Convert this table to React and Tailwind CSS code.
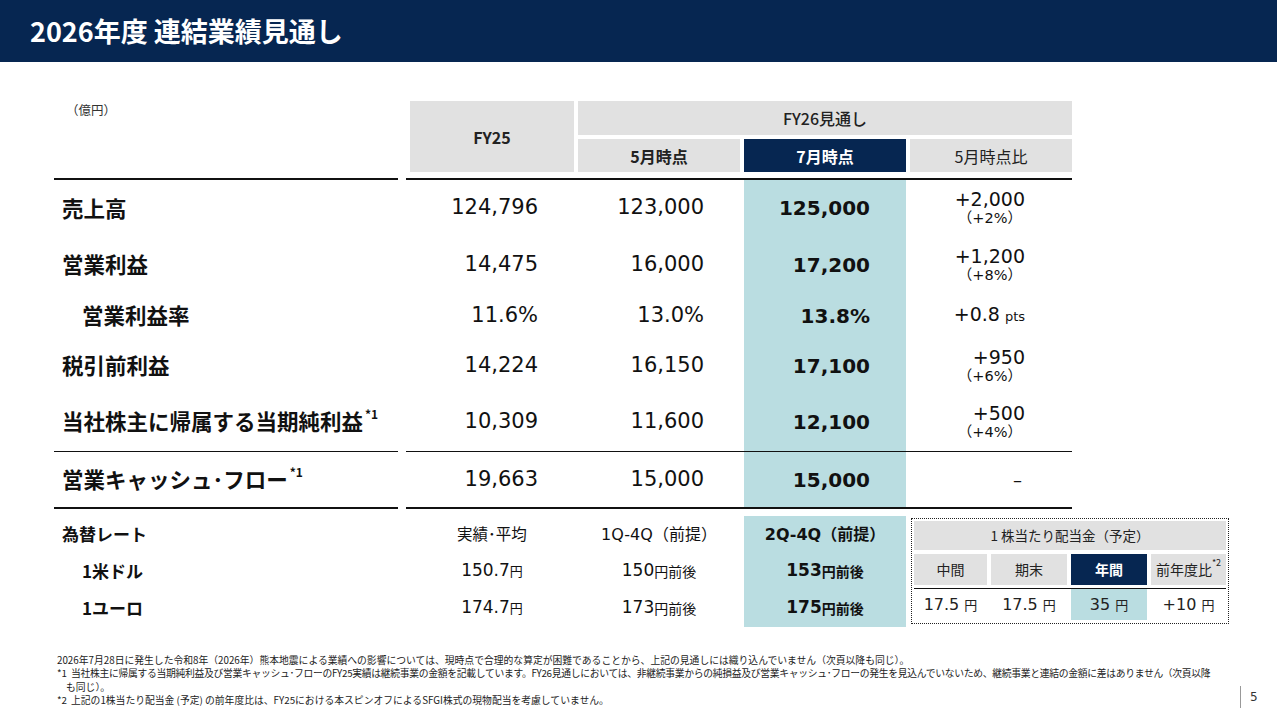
import React from "react";

const rows = [
  { label: "売上高", h: "h-[57px]", fy25: "124,796", may: "123,000", jul: "125,000", diff: "+2,000", pct: "（+2%）" },
  { label: "営業利益", h: "h-[56px]", fy25: "14,475", may: "16,000", jul: "17,200", diff: "+1,200", pct: "（+8%）" },
  { label: "営業利益率", h: "h-[46px]", indent: true, fy25: "11.6%", may: "13.0%", jul: "13.8%", diff: "+0.8", unit: "pts" },
  { label: "税引前利益", h: "h-[54px]", fy25: "14,224", may: "16,150", jul: "17,100", diff: "+950", pct: "（+6%）" },
  { label: "当社株主に帰属する当期純利益", h: "h-[58px]", note: "*1", fy25: "10,309", may: "11,600", jul: "12,100", diff: "+500", pct: "（+4%）" },
];

const fx = [
  { label: "為替レート", head: true },
  { label: "1米ドル", fy25: "150.7", fy25u: "円", may: "150", mayu: "円前後", jul: "153", julu: "円前後" },
  { label: "1ユーロ", fy25: "174.7", fy25u: "円", may: "173", mayu: "円前後", jul: "175", julu: "円前後" },
];

const jp = "font-['Noto_Sans_CJK_JP',sans-serif]";

function Rule() {
  return (
    <div className="flex gap-[8px]">
      <div className="w-[344px] h-[1.5px] bg-[#111]" />
      <div className="w-[666px] h-[1.5px] bg-[#111]" />
    </div>
  );
}

function DataRow({ r }) {
  return (
    <div className={`grid grid-cols-[352px_164px_162px_162px_162px] gap-x-[4px] ${r.h}`}>
      <div
        className={`flex items-center text-[21.5px] font-bold text-[#111] font-['Noto_Sans_CJK_JP',sans-serif] ${
          r.indent ? "pl-[28px]" : "pl-[8px]"
        }`}
      >
        {r.label}
        {r.note && <sup className="text-[12px] font-bold ml-[2px] -mt-[4px]">{r.note}</sup>}
      </div>
      <div className="flex items-center justify-end pr-[36px] text-[21px] text-[#111]">{r.fy25}</div>
      <div className="flex items-center justify-end pr-[36px] text-[21px] text-[#111]">{r.may}</div>
      <div className="flex items-center justify-end pr-[36px] text-[20px] font-bold text-[#111] bg-[#badde1]">
        {r.jul}
      </div>
      <div className="flex flex-col items-end justify-center pr-[47px] text-[#111]">
        {r.diff === "–" ? (
          <span className="text-[18px] pr-[3px]">–</span>
        ) : (
          <>
            <span className="text-[19px] leading-[21px]">
              {r.diff}
              {r.unit && <span className="text-[13px] ml-[5px]">{r.unit}</span>}
            </span>
            {r.pct && <span className="text-[14.5px] leading-[17px] pr-[3px]">{r.pct}</span>}
          </>
        )}
      </div>
    </div>
  );
}

function Yen({ v, u = "円" }) {
  return (
    <div className="flex items-center justify-center">
      {v}
      <span className={`text-[13px] ml-[5px] ${jp}`}>{u}</span>
    </div>
  );
}

function Dividend() {
  return (
    <div className="ml-[1px] mt-[2px] w-[318px] h-[106px] border border-dotted border-[#222] p-[2px] text-[#222] font-['Noto_Sans_CJK_JP',sans-serif]">
      <div className="h-[29px] bg-[#e1e1e1] flex items-center justify-center text-[13.5px]">
        1 株当たり配当金（予定）
      </div>
      <div className="mt-[4px] grid grid-cols-[73px_76px_76px_75px] gap-x-[4px] h-[31px] text-[14px]">
        <div className="bg-[#e1e1e1] flex items-center justify-center">中間</div>
        <div className="bg-[#e1e1e1] flex items-center justify-center">期末</div>
        <div className="bg-[#062651] text-white font-bold flex items-center justify-center">年間</div>
        <div className="bg-[#e1e1e1] flex items-center justify-center">
          前年度比<sup className="text-[9px] -mt-[4px]">*2</sup>
        </div>
      </div>
      <div className="mt-[3px] h-[1.5px] bg-[#111]" />
      <div className="grid grid-cols-[73px_76px_76px_75px] gap-x-[4px] h-[31px] text-[16px] font-['DejaVu_Sans','Noto_Sans_CJK_JP',sans-serif]">
        <Yen v="17.5" />
        <Yen v="17.5" />
        <div className="bg-[#badde1] flex items-center justify-center">
          35<span className={`text-[13px] ml-[5px] ${jp}`}>円</span>
        </div>
        <Yen v="+10" />
      </div>
    </div>
  );
}

export default function App() {
  return (
    <div className="w-[1277px] h-[716px] bg-white overflow-hidden font-['DejaVu_Sans','Noto_Sans_CJK_JP',sans-serif]">
      <div className="h-[62px] bg-[#062651] flex items-center pl-[30px] text-white text-[27px] font-bold font-['Noto_Sans_CJK_JP',sans-serif]">
        2026年度 連結業績見通し
      </div>

      <div className="pl-[54px] pt-[39px]">
        {/* header cells */}
        <div className="grid grid-cols-[352px_164px_162px_162px_162px] grid-rows-[34px_33px] gap-[4px] font-['Noto_Sans_CJK_JP',sans-serif] text-[16px] text-[#222]">
          <div className="row-span-2 pl-[12px] text-[12.5px] text-[#333]">（億円）</div>
          <div className="row-span-2 bg-[#e1e1e1] flex items-center justify-center font-bold">FY25</div>
          <div className="col-span-3 bg-[#e1e1e1] flex items-center justify-center font-medium">FY26見通し</div>
          <div className="bg-[#e1e1e1] flex items-center justify-center font-bold">5月時点</div>
          <div className="bg-[#062651] text-white flex items-center justify-center font-bold">7月時点</div>
          <div className="bg-[#e1e1e1] flex items-center justify-center">5月時点比</div>
        </div>

        <div className="mt-[6px]">
          <Rule />
        </div>

        {rows.map((r) => (
          <DataRow key={r.label} r={r} />
        ))}
        <Rule />
        <DataRow
          r={{
            label: "営業キャッシュ･フロー",
            h: "h-[55px]",
            note: "*1",
            fy25: "19,663",
            may: "15,000",
            jul: "15,000",
            diff: "–",
          }}
        />
        <Rule />

        {/* exchange rates + dividend */}
        <div className="mt-[7px] grid grid-cols-[352px_164px_162px_162px_319px] grid-rows-[37px_37px_37px] gap-x-[4px] text-[#111]">
          {fx.map((f, i) => (
            <React.Fragment key={f.label}>
              <div
                className={`flex items-center text-[17px] font-bold font-['Noto_Sans_CJK_JP',sans-serif] ${
                  f.head ? "pl-[8px]" : "pl-[28px]"
                }`}
                style={{ gridRow: i + 1, gridColumn: 1 }}
              >
                {f.label}
              </div>
              <div className="flex items-center justify-center text-[17px]" style={{ gridRow: i + 1, gridColumn: 2 }}>
                {f.head ? (
                  <span className={`text-[15.5px] ${jp}`}>実績･平均</span>
                ) : (
                  <>
                    {f.fy25}
                    <span className={`text-[13px] ${jp}`}>{f.fy25u}</span>
                  </>
                )}
              </div>
              <div className="flex items-center justify-center text-[17px]" style={{ gridRow: i + 1, gridColumn: 3 }}>
                {f.head ? (
                  <span className="text-[16px]">
                    1Q-4Q<span className={jp}>（前提）</span>
                  </span>
                ) : (
                  <>
                    {f.may}
                    <span className={`text-[14px] ${jp}`}>{f.mayu}</span>
                  </>
                )}
              </div>
              <div
                className="flex items-center justify-center bg-[#badde1] font-bold text-[17px]"
                style={{ gridRow: i + 1, gridColumn: 4 }}
              >
                {f.head ? (
                  <span className="text-[16px]">
                    2Q-4Q<span className={jp}>（前提）</span>
                  </span>
                ) : (
                  <>
                    {f.jul}
                    <span className={`text-[14px] ${jp}`}>{f.julu}</span>
                  </>
                )}
              </div>
            </React.Fragment>
          ))}
          <div style={{ gridRow: "1 / span 3", gridColumn: 5 }}>
            <Dividend />
          </div>
        </div>

        {/* footnotes */}
        <div className="mt-[27px] flex items-end">
          <div className="w-[1186px] pl-[3px] text-[9.8px] leading-[13.5px] text-[#222] font-['Noto_Sans_CJK_JP',sans-serif] whitespace-nowrap">
            <div>
              2026年7月28日に発生した令和8年（2026年）熊本地震による業績への影響については、現時点で合理的な算定が困難であることから、上記の見通しには織り込んでいません（次頁以降も同じ）。
            </div>
            <div className="flex">
              <span className="w-[14px]">*1</span>
              <span className="tracking-[-0.3px]">
                当社株主に帰属する当期純利益及び営業キャッシュ･フローのFY25実績は継続事業の金額を記載しています。FY26見通しにおいては、非継続事業からの純損益及び営業キャッシュ･フローの発生を見込んでいないため、継続事業と連結の金額に差はありません（次頁以降
              </span>
            </div>
            <div className="pl-[9px]">も同じ）。</div>
            <div className="flex">
              <span className="w-[14px]">*2</span>
              <span>
                上記の1株当たり配当金 (予定) の前年度比は、FY25における本スピンオフによるSFGI株式の現物配当を考慮していません。
              </span>
            </div>
          </div>
          <div className="h-[22px] border-l border-[#999] pl-[9px] flex items-center text-[12px] text-[#333]">
            5
          </div>
        </div>
      </div>
    </div>
  );
}
